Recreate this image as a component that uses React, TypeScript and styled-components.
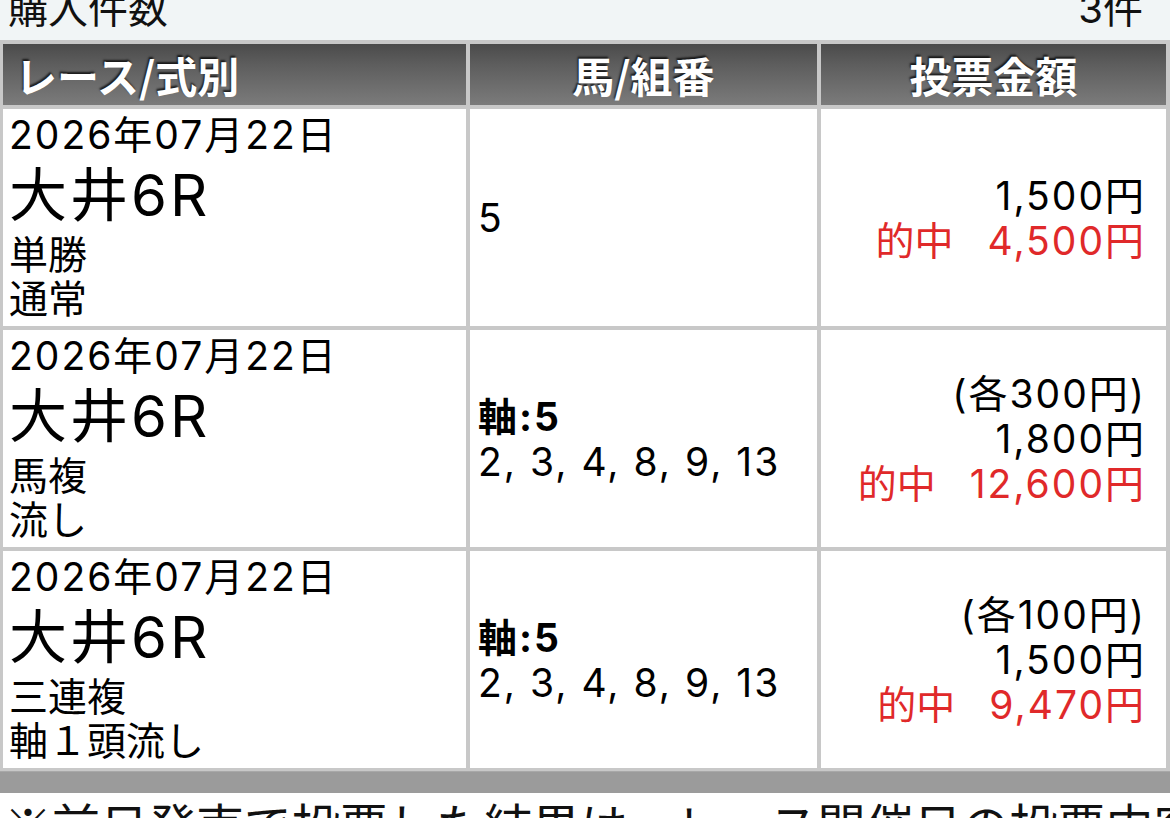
import React from "react";
import styled, { createGlobalStyle } from "styled-components";

const Global = createGlobalStyle`
  html, body { margin: 0; padding: 0; background: #ffffff; }
  body {
    font-family: Inter, "Noto Sans CJK JP", "Noto Sans", sans-serif;
    color: #000;
    overflow: hidden;
  }
`;

const Page = styled.div`
  width: 1170px;
  height: 818px;
  overflow: hidden;
  background: #ffffff;
`;

const CountBar = styled.div`
  display: flex;
  justify-content: space-between;
  align-items: center;
  background: #f1f5f6;
  height: 40px;
  overflow: hidden;
  padding: 0 27px 0 8px;
`;

const CountText = styled.span`
  font-size: 40px;
  line-height: 44px;
  margin-top: -22px;
  color: #111;
`;

const Table = styled.div`
  display: grid;
  grid-template-columns: 463px 347px 1fr;
  gap: 4px;
  padding: 4px 4px 3px 3px;
  background: #c8c8c8;
`;

const HeadCell = styled.div<{ $align: "left" | "center" }>`
  height: 61px;
  display: flex;
  align-items: center;
  justify-content: ${(p) => (p.$align === "left" ? "flex-start" : "center")};
  padding: 0 12px;
  background: linear-gradient(#4b4b4b 0%, #5e5e5e 35%, #7b7b7b 100%);
  color: #ffffff;
  font-family: "Noto Sans CJK JP", sans-serif;
  font-size: 42px;
  font-weight: 700;
  text-shadow: -1px -2px 2px rgba(0, 0, 0, 0.75);
  box-sizing: border-box;
`;

const Cell = styled.div<{ $align?: "left" | "right" }>`
  background: #ffffff;
  display: flex;
  flex-direction: column;
  justify-content: center;
  align-items: ${(p) => (p.$align === "right" ? "flex-end" : "flex-start")};
  text-align: ${(p) => (p.$align === "right" ? "right" : "left")};
  letter-spacing: 2px;
  box-sizing: border-box;
`;

const RaceCell = styled(Cell)`
  padding: 4px 6px 5px 6px;
`;

const HorseCell = styled(Cell)`
  padding: 0 8px;
`;

const AmountCell = styled(Cell)`
  padding: 0 20px 0 8px;
`;

const Line = styled.div<{ $bold?: boolean; $red?: boolean }>`
  font-size: 39px;
  line-height: 45px;
  white-space: pre;
  font-weight: ${(p) => (p.$bold ? 700 : 400)};
  color: ${(p) => (p.$red ? "#e0292a" : "#000")};
`;

const HitLabel = styled.span`
  letter-spacing: 0;
  margin-right: 34px;
`;

const Small = styled.div<{ $kanji?: boolean }>`
  font-size: 39px;
  line-height: 44px;
  white-space: nowrap;
  letter-spacing: ${(p) => (p.$kanji ? "0" : "2px")};
`;

const Big = styled.div`
  font-size: 58px;
  line-height: 76px;
  white-space: nowrap;
  letter-spacing: 3px;
`;

const FooterBand = styled.div`
  height: 22px;
  background: #9b9b9b;
  border-top: 1px solid #a8a8a8;
  box-sizing: border-box;
`;

const Note = styled.p`
  margin: 0;
  padding: 2px 0 0 4px;
  font-family: "Noto Sans CJK JP", sans-serif;
  font-size: 48px;
  line-height: 56px;
  white-space: nowrap;
  overflow: hidden;
  color: #111;
`;

type Row = {
  date: string;
  venue: string;
  kind: string;
  method: string;
  axis?: string;
  horses: string;
  each?: string;
  total: string;
  hit: string;
};

const rows: Row[] = [
  {
    date: "2026年07月22日",
    venue: "大井6R",
    kind: "単勝",
    method: "通常",
    horses: "5",
    total: "1,500円",
    hit: "4,500円",
  },
  {
    date: "2026年07月22日",
    venue: "大井6R",
    kind: "馬複",
    method: "流し",
    axis: "軸:5",
    horses: "2, 3, 4, 8, 9, 13",
    each: "(各300円)",
    total: "1,800円",
    hit: "12,600円",
  },
  {
    date: "2026年07月22日",
    venue: "大井6R",
    kind: "三連複",
    method: "軸１頭流し",
    axis: "軸:5",
    horses: "2, 3, 4, 8, 9, 13",
    each: "(各100円)",
    total: "1,500円",
    hit: "9,470円",
  },
];

export default function App() {
  return (
    <Page>
      <Global />
      <CountBar>
        <CountText>購入件数</CountText>
        <CountText>3件</CountText>
      </CountBar>
      <Table>
        <HeadCell $align="left">レース/式別</HeadCell>
        <HeadCell $align="center">馬/組番</HeadCell>
        <HeadCell $align="center">投票金額</HeadCell>
        {rows.map((r, i) => (
          <React.Fragment key={i}>
            <RaceCell>
              <Small>{r.date}</Small>
              <Big>{r.venue}</Big>
              <Small $kanji>{r.kind}</Small>
              <Small $kanji>{r.method}</Small>
            </RaceCell>
            <HorseCell>
              {r.axis && <Line $bold>{r.axis}</Line>}
              <Line>{r.horses}</Line>
            </HorseCell>
            <AmountCell $align="right">
              {r.each && <Line>{r.each}</Line>}
              <Line>{r.total}</Line>
              <Line $red>
                <HitLabel>的中</HitLabel>
                {r.hit}
              </Line>
            </AmountCell>
          </React.Fragment>
        ))}
      </Table>
      <FooterBand />
      <Note>※前日発売で投票した結果は、レース開催日の投票内容</Note>
    </Page>
  );
}
